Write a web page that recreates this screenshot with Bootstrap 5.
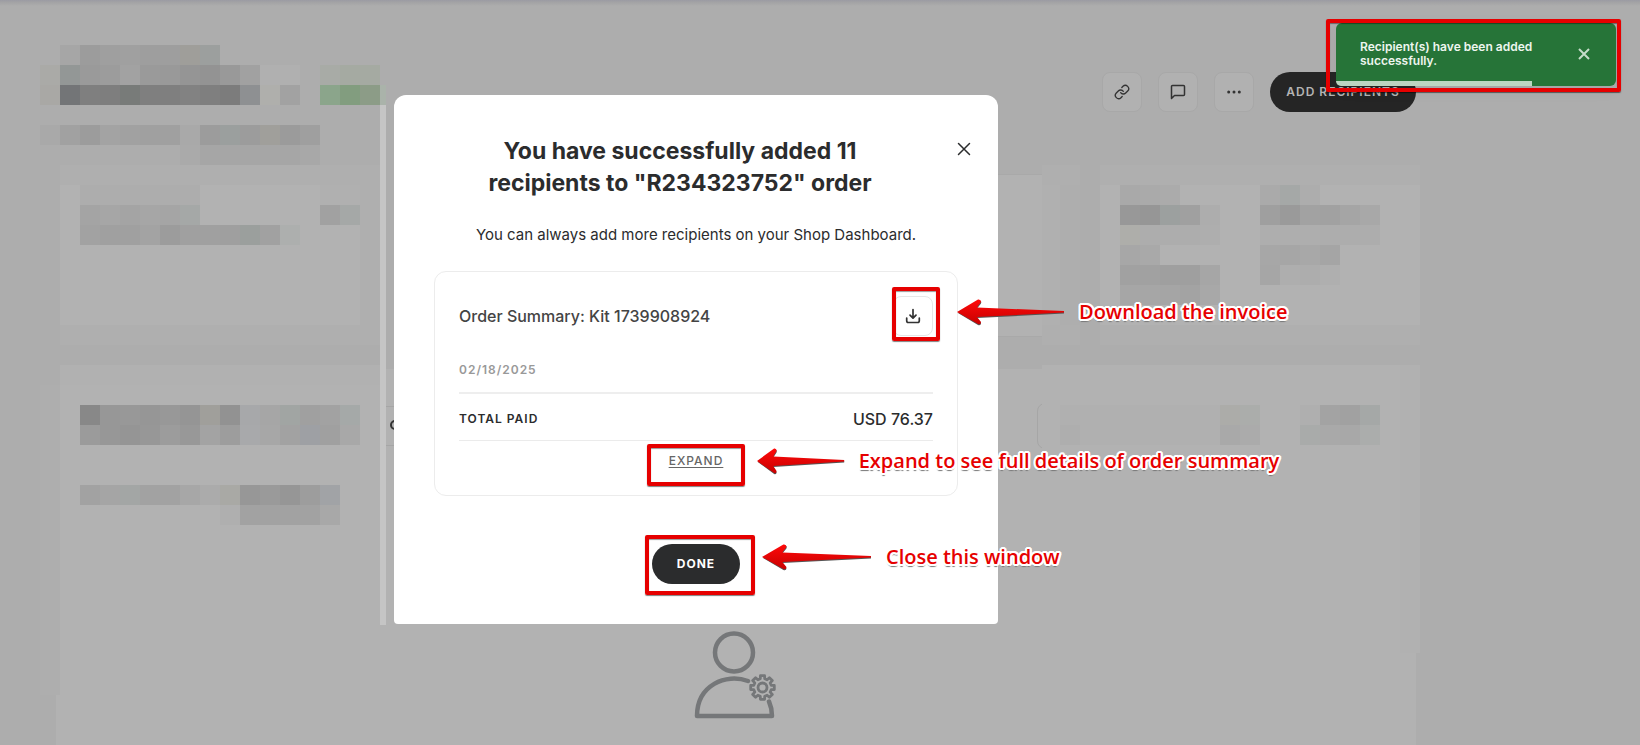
<!DOCTYPE html>
<html lang="en">
<head>
<meta charset="utf-8">
<meta name="viewport" content="width=device-width, initial-scale=1">
<title>Order recipients</title>
<link href="https://cdn.jsdelivr.net/npm/bootstrap@5.3.0/dist/css/bootstrap.min.css" rel="stylesheet">
<style>
  :root { --ink: #2b2c2d; --page: #adadad; --panel: #b2b2b2; --edge: #a9a9a9; --note: #e60000; }
  body { background: var(--page); color: var(--ink); font-family: Inter, Roboto, "Liberation Sans", sans-serif; font-size: 15px; line-height: 24px; overflow-x: hidden; }

  /* Dimmed page */
  .shell { min-height: 100vh; padding: 72px 224px 0 56px; background: linear-gradient(#9b9ba3 0, #a2a2a4 2px, var(--page) 6px); }
  .tool-btn { width: 40px; height: 40px; border: 1px solid #a8a8a8; border-radius: 8px; background: #b1b1b1; color: #333; }
  .dark-btn { height: 40px; border: 0; border-radius: 20px; background: var(--ink); color: #fff; font-size: 12px; font-weight: 700; line-height: 16px; letter-spacing: 1px; }
  .dark-btn.dimmed { width: 146px; background: #252525; color: #b4b4b4; font-weight: 600; }
  .done-btn { width: 88px; }
  .info-row { gap: 40px; margin-top: 62px; }
  .info-box { height: 163px; background: var(--panel); border: 1px solid var(--edge); border-radius: 8px; }
  .side-box { width: 320px; flex: none; }
  .list-panel { background: var(--panel); margin-top: 32px; padding: 34px 0 26px; }
  .filter-row { gap: 60px; padding: 0 24px 0 304px; }
  .filter-search { height: 40px; border: 1px solid #a6a6a6; border-radius: 8px; background: none; padding-left: 29px; }
  .filter-pick { width: 355px; flex: none; height: 46px; border: 1px solid #a6a6a6; border-radius: 8px; background: none; }
  .filter-glass { position: absolute; left: 333px; top: 16px; }
  .mosaic { position: absolute; left: 0; top: 0; pointer-events: none; }

  /* Dialog */
  .dialog-layer { position: absolute; inset: 0 248px auto 0; padding-top: 95px; }
  .dialog-box { width: 604px; background: #fff; border-radius: 12px 12px 4px 4px; padding: 40px; }
  .dialog-title { font-size: 23px; line-height: 32px; font-weight: 700; padding-right: 32px; margin: 0 0 24px; }
  .dialog-close { position: absolute; right: 22px; top: 42px; width: 24px; height: 24px; }
  .summary { margin-top: 24px; border: 1px solid #ececec; border-radius: 12px; padding: 24px; height: 225px; }
  .summary-name { font-size: 16px; font-weight: 500; line-height: 24px; color: #444; margin: 0; }
  .summary-sum { font-size: 16px; font-weight: 500; }
  .caps { font-size: 12px; line-height: 16px; letter-spacing: 1px; font-weight: 600; }
  .summary-date { color: #999; padding: 26px 0 14px; border-bottom: 2px solid #eee; }
  .summary-total { border-bottom: 1px solid #ebebeb; padding: 13px 0 9px; }
  .save-btn { width: 40px; height: 40px; border: 1px solid #e6e6e6; border-radius: 8px; background: #fff; }
  .expand-btn { color: #666; border: 0; background: none; text-decoration: underline; text-underline-offset: 2px; padding: 0; font-weight: 500; }
  .plain-btn { border: 0; background: none; padding: 0; }

  /* Red call-outs */
  .ring { position: absolute; border: 4px solid var(--note); border-radius: 2px; box-shadow: 0 1px 1px rgba(0,0,0,.5), inset 0 1px 1px rgba(0,0,0,.4); pointer-events: none; }
  .ring-save { inset: -9px -7px -5px -1px; }
  .ring-expand { inset: -9px -22px -17px -22px; }
  .ring-done { inset: -9px -15px -11px -7px; }
  .ring-toast { inset: -4px -5px -6px -10px; }
  .hint { position: absolute; display: flex; align-items: center; white-space: nowrap; gap: 14px; pointer-events: none;
    font-family: "Open Sans", "Noto Sans", sans-serif; font-size: 20px; font-weight: 600; line-height: 28px; color: var(--note); }
  .hint span { text-shadow: 2px 0 #fff, -2px 0 #fff, 0 2px #fff, 0 -2px #fff, 2px 1px #fff, -2px 1px #fff, 2px -1px #fff, -2px -1px #fff, 1px 2px #fff, -1px 2px #fff, 1px -2px #fff, -1px -2px #fff, 0 3px 1px #777; }
  .hint-save { left: 64px; top: 2px; }
  .hint-expand { left: 88px; top: -6px; }
  .hint-done { left: 110px; top: -1px; }

  /* Toast */
  .notice { position: absolute; right: 24px; top: 23px; width: 280px; height: 63px; background: #267438; border-radius: 6px; box-shadow: 0 4px 16px rgba(0,0,0,.06); }
  .notice-text { font-size: 12px; line-height: 14px; font-weight: 600; color: #eef6ef; padding: 17px 0 0 24px; width: 210px; }
  .notice-close { position: absolute; right: 22px; top: 21px; width: 20px; height: 20px; color: #c6dcca; line-height: 0; }
  .notice-track { position: absolute; inset: auto 0 0 0; height: 5px; border-radius: 0 0 6px 6px; overflow: hidden; }
  .notice-bar { height: 5px; background: #bcd5c1; }
</style>
</head>
<body class="position-relative">

<main class="shell d-flex flex-column">
  <div class="d-flex justify-content-end gap-3">
    <button class="tool-btn p-0 d-flex align-items-center justify-content-center" type="button" aria-label="Copy link">
      <svg width="16" height="16" viewBox="0 0 24 24" fill="none" stroke="currentColor" stroke-width="2" stroke-linecap="round" stroke-linejoin="round"><path d="M10 13a5 5 0 0 0 7.540.54l3-3a5 5 0 0 0-7.070-7.070l-1.720 1.710"/><path d="M14 11a5 5 0 0 0-7.540-.54l-3 3a5 5 0 0 0 7.070 7.070l1.710-1.710"/></svg>
    </button>
    <button class="tool-btn p-0 d-flex align-items-center justify-content-center" type="button" aria-label="Comments">
      <svg width="16" height="16" viewBox="0 0 16 16" fill="none" stroke="currentColor" stroke-width="1.500" stroke-linejoin="round"><path d="M1.500 14.500V2.500a1 1 0 0 1 1-1h11a1 1 0 0 1 1 1v8a1 1 0 0 1-1 1H4.500z"/></svg>
    </button>
    <button class="tool-btn p-0 d-flex align-items-center justify-content-center" type="button" aria-label="More">
      <svg width="16" height="16" viewBox="0 0 16 16" fill="currentColor"><circle cx="2.700" cy="8" r="1.500"/><circle cx="8" cy="8" r="1.500"/><circle cx="13.300" cy="8" r="1.500"/></svg>
    </button>
    <button class="dark-btn dimmed p-0" type="button">ADD RECIPIENTS</button>
  </div>

  <div class="info-row d-flex">
    <section class="info-box side-box"></section>
    <section class="info-box flex-grow-1"></section>
    <section class="info-box side-box"></section>
  </div>

  <section class="list-panel flex-grow-1 d-flex flex-column justify-content-between">
    <div class="filter-row d-flex align-items-center position-relative">
      <input class="filter-search flex-grow-1" type="search" aria-label="Search recipients">
      <svg class="filter-glass" width="14" height="14" viewBox="0 0 14 14" fill="none" stroke="#333" stroke-width="2"><circle cx="6" cy="6" r="4"/><path d="M9 9l4 4"/></svg>
      <button class="filter-pick" type="button" aria-label="Choose columns"></button>
    </div>
    <div class="d-flex justify-content-center">
      <svg width="80" height="88" viewBox="696 631 80 88" overflow="visible" fill="none" stroke="#757779" stroke-width="4.500" stroke-linecap="round" stroke-linejoin="round">
        <circle cx="734" cy="652.500" r="19"/>
        <path d="M748 681c-22-8-51 4-51 35h75c0-6-1-10-3-14.500"/>
        <g stroke-width="2.800"><circle cx="762.500" cy="687.500" r="4.500"/><path id="gear"/></g>
      </svg>
    </div>
  </section>
</main>

<svg class="mosaic" id="mosaic" width="1422" height="700" aria-hidden="true"></svg>

<div class="dialog-layer d-flex justify-content-center">
  <div class="dialog-box position-relative text-center" role="dialog" aria-labelledby="dlg-title">
    <h1 class="dialog-title" id="dlg-title">You have successfully added 11<br>recipients to "R234323752" order</h1>
    <button class="dialog-close plain-btn d-flex align-items-center justify-content-center" type="button" aria-label="Close">
      <svg width="14" height="14" viewBox="0 0 14 14" stroke="#2b2c2d" stroke-width="1.500" stroke-linecap="round"><path d="M1.500 1.500l11 11M12.500 1.500l-11 11"/></svg>
    </button>
    <p class="m-0">You can always add more recipients on your Shop Dashboard.</p>

    <section class="summary text-start">
      <div class="d-flex justify-content-between align-items-center">
        <h2 class="summary-name">Order Summary: Kit 1739908924</h2>
        <div class="position-relative">
          <button class="save-btn p-0 d-flex align-items-center justify-content-center" type="button" aria-label="Download invoice">
            <svg width="16" height="16" viewBox="0 0 16 16" fill="none" stroke="#333" stroke-width="1.700" stroke-linecap="round" stroke-linejoin="round"><path d="M8 1.500v8.500M5 7.200l3 3 3-3M1.700 10v2.800a1.700 1.700 0 0 0 1.700 1.700h9.200a1.700 1.700 0 0 0 1.700-1.700V10"/></svg>
          </button>
          <div class="ring ring-save"></div>
          <div class="hint hint-save">
            <svg width="108" height="27" viewBox="0 0 108 27"><use href="#arrow"/></svg>
            <span>Download the invoice</span>
          </div>
        </div>
      </div>
      <div class="summary-date caps">02/18/2025</div>
      <div class="summary-total d-flex justify-content-between align-items-center">
        <span class="caps">TOTAL PAID</span><span class="summary-sum">USD 76.37</span>
      </div>
      <div class="d-flex justify-content-center pt-2 mt-1">
        <div class="position-relative d-flex">
          <button class="expand-btn caps" type="button">EXPAND</button>
          <div class="ring ring-expand"></div>
          <div class="hint hint-expand">
            <svg width="88" height="27" viewBox="0 0 108 27" preserveAspectRatio="none"><use href="#arrow"/></svg>
            <span>Expand to see full details of order summary</span>
          </div>
        </div>
      </div>
    </section>

    <div class="d-flex justify-content-center mt-5">
      <div class="position-relative">
        <button class="dark-btn done-btn p-0" type="button">DONE</button>
        <div class="ring ring-done"></div>
        <div class="hint hint-done">
          <svg width="110" height="27" viewBox="0 0 108 27" preserveAspectRatio="none"><use href="#arrow"/></svg>
          <span>Close this window</span>
        </div>
      </div>
    </div>
  </div>
</div>

<div class="notice" role="status">
  <div class="notice-text">Recipient(s) have been added<br>successfully.</div>
  <button class="notice-close plain-btn" type="button" aria-label="Dismiss">
    <svg width="12" height="12" viewBox="0 0 12 12" stroke="currentColor" stroke-width="2"><path d="M1 1l10 10M11 1L1 11"/></svg>
  </button>
  <div class="notice-track"><div class="notice-bar" style="width: 70%"></div></div>
  <div class="ring ring-toast"></div>
</div>

<svg width="0" height="0" class="position-absolute" aria-hidden="true">
  <defs>
    <linearGradient id="redfade" x1="0" y1="0" x2="0" y2="1"><stop offset="0" stop-color="#ff0a0a"/><stop offset="1" stop-color="#c80000"/></linearGradient>
    <g id="arrow">
      <path d="M1 14L22 1.500q3-.5 2 3L20 9.500 107 13v1.500L20 19l4 5q0 3-3 2z" fill="#555"/>
      <path d="M0 13L21 .500q3-.5 3 2.500L20 8.500 107 12v1.500L20 18l4 5q0 3-3 2z" fill="url(#redfade)"/>
    </g>
  </defs>
</svg>

<script src="https://cdn.jsdelivr.net/npm/bootstrap@5.3.0/dist/js/bootstrap.bundle.min.js"></script>
<script>
  // Redacted areas: broad patches [x, y, width, height, grey], then rows of 20px cells.
  const patches = [
    [40, 165, 346, 530, 'adadad'], [60, 165, 320, 20, 'afafaf'], [60, 185, 300, 140, 'b2b2b2'], [360, 185, 20, 140, 'afafaf'],
    [60, 325, 320, 20, 'afafaf'], [60, 365, 326, 20, 'b1b1b1'], [40, 385, 20, 310, 'aeaeae'], [60, 385, 326, 310, 'b2b2b2'],
    [80, 185, 120, 20, 'adadad'], [320, 185, 40, 20, 'b0b0b0'],
    [1042, 165, 380, 200, 'adadad'], [1042, 165, 38, 180, 'afafaf'], [1060, 185, 20, 140, 'aeaeae'], [1042, 185, 18, 140, 'b0b0b0'],
    [1100, 165, 320, 180, 'afafaf'], [1100, 185, 320, 140, 'b2b2b2'], [1042, 365, 378, 288, 'b1b1b1'], [1042, 365, 358, 288, 'b2b2b2'],
    [1060, 405, 160, 40, 'b0b0b0'], [380, 105, 6, 520, 'c5c5c5'], [380, 85, 6, 20, 'aab3aa']
  ];
  const rows = [
    [60, 45, 'a6a6a6 9c9c9c 9f9f9f a0a0a0 9e9e9e 9e9e9e 9f9e9a 9c9f9e'],
    [40, 65, 'aaaaa7 939796 9a9a9a 9c9c9c a2a2a2 9a9a9a 999999 959595 939393 999999 a1a1a1 b0b0b0 b0b0b0'],
    [320, 65, 'a8aba6 a5aaa2 a5aaa2'],
    [40, 85, 'a9a8a5 737577 7f7f7f 7e7e7e 787b79 7f7f7f 7f7f7f 828282 7f7f7f 7c7c7c 8e9092 afafac a2a2a2'],
    [320, 85, '8ba58b 829d7f 8c9c87'],
    [40, 125, 'a9a9a9 a1a1a1 9c9c9c a3a3a3 a1a1a1 a0a0a0 a0a0a0 a9a9a9 9c9c9c 9b9f9e 9c9c9c a09f9b 9b9b9b 9f9f9f'],
    [180, 145, 'aaaaaa a6a6a6 a6a6a6 a6a6a6 a6a6a6 a6a6a6 a8a8a8'],
    [80, 205, 'a4a4a4 a6a6a6 a4a4a4 a6a6a6 a5a5a5 a5a8a7'], [320, 205, 'a1a1a1 a5a8a7'],
    [80, 225, 'a2a2a2 a0a0a0 a0a0a0 a3a3a3 9c9c9c a0a0a0 a0a0a0 9f9f9f 9b9f9d a1a1a1 adafae'],
    [80, 405, '888888 979797 989898 969696 989898 959595 a09f9b 929292 a7a8aa a6a6a6 a1a5a3 a0a0a0 a2a2a2 a5a9a8'],
    [80, 425, '9b9b9b 979797 959595 979797 9c9c9c 989898 a3a3a3 9d9d9d a8a9ab a7a7a7 a2a2a2 9ea0a4 a0a0a0 a8a8a8'],
    [80, 485, 'a2a2a2 a5a5a5 a3a6a5 a2a2a2 a2a2a2 a7a7a7 ababab a9a9a5 979797 9a9a9a 969696 9d9d9d a1a3a6'],
    [220, 505, 'afafaf a2a2a2 a2a2a2 a2a2a2 a2a2a2 a8a8a8'],
    [1120, 185, 'a9a9a9 aaaaaa ababab'], [1260, 185, 'aaaaaa a5a8a7 adadad'],
    [1120, 205, '989898 969696 9ca09f a0a0a0 adadad'], [1260, 205, '9f9f9f 9a9a9a a2a2a2 a1a1a1 a5a5a5 a8a8a8'],
    [1120, 225, 'aeaeaa adadad adadad adadad aeaeae'], [1260, 225, 'aeaeae aeaeae aeaeae adadad adadad adadad'],
    [1120, 245, 'a7a7a7 a9a9a9'], [1260, 245, 'a7a7a7 a6a6a6 a8a8a8 a5a5a5'],
    [1120, 265, 'a1a1a1 a1a1a1 9f9f9f 9f9f9f a6a6a6'], [1260, 265, 'a6a6a6 aeaeae adadad afafaf'],
    [1120, 285, 'a6a6a6 a6a6a6 a5a5a5 a3a3a3 a8a8a8'],
    [1220, 405, 'acaca9 abadab'], [1300, 405, 'afafaf a3a3a3 a1a1a1 a5a8a7'],
    [1060, 425, 'aeaeae'], [1220, 425, 'a9a9a9 ababab'], [1300, 425, 'a9abaa a9a9a9 a8a8a8 abadac']
  ];
  const cell = (x, y, w, h, c) => `<rect x="${x}" y="${y}" width="${w}" height="${h}" fill="#${c}"/>`;
  document.getElementById('mosaic').innerHTML =
    patches.map(p => cell(...p)).join('') +
    rows.map(([x, y, s]) => s.split(' ').map((c, i) => cell(x + 20 * i, y, 20, 20, c)).join('')).join('');

  // Gear outline: eight teeth around the hub.
  let d = '';
  for (let i = 0; i < 8; i++) {
    [[-14, 9], [-10, 12], [10, 12], [14, 9]].forEach(([deg, r], k) => {
      const a = (i * 45 + deg) * Math.PI / 180;
      d += (i + k ? 'L' : 'M') + (762.5 + r * Math.sin(a)).toFixed(1) + ' ' + (687.5 - r * Math.cos(a)).toFixed(1);
    });
  }
  document.getElementById('gear').setAttribute('d', d + 'z');
</script>
</body>
</html>
